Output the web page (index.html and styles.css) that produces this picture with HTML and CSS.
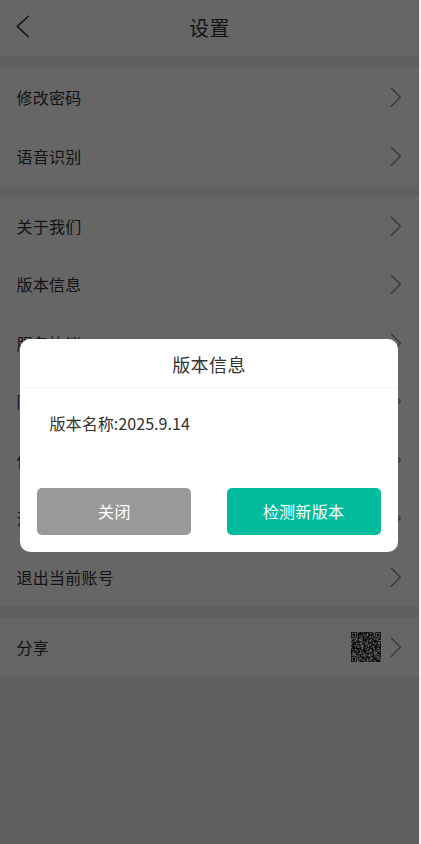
FILE: index.html
```html
<!DOCTYPE html>
<html lang="zh-CN">
<head>
<meta charset="utf-8">
<title>设置</title>
<link rel="stylesheet" href="styles.css">
</head>
<body>
<svg class="symbols" aria-hidden="true">
  <symbol id="next" viewBox="0 0 12 20"><path d="M1.4 1.2 10.4 10.2 1.4 19.2"/></symbol>
</svg>
<div class="screen">
  <header class="header">
    <svg class="back" viewBox="0 0 14 23"><path d="M12.4 1.2 1.2 11.4 12.4 21.8"/></svg>
    <h1>设置</h1>
  </header>
  <section class="group">
    <div class="row"><span>修改密码</span><svg class="next"><use href="#next"/></svg></div>
    <div class="row"><span>语音识别</span><svg class="next"><use href="#next"/></svg></div>
  </section>
  <section class="group">
    <div class="row"><span>关于我们</span><svg class="next"><use href="#next"/></svg></div>
    <div class="row"><span>版本信息</span><svg class="next"><use href="#next"/></svg></div>
    <div class="row"><span>服务协议</span><svg class="next"><use href="#next"/></svg></div>
    <div class="row"><span>隐私政策</span><svg class="next"><use href="#next"/></svg></div>
    <div class="row"><span>使用帮助</span><svg class="next"><use href="#next"/></svg></div>
    <div class="row"><span>注销账号</span><svg class="next"><use href="#next"/></svg></div>
    <div class="row"><span>退出当前账号</span><svg class="next"><use href="#next"/></svg></div>
  </section>
  <section class="group">
    <div class="row"><span>分享</span><svg class="qr" viewBox="0 0 37 37"><path id="qr"/></svg><svg class="next"><use href="#next"/></svg></div>
  </section>
  <div class="overlay">
    <div class="dialog">
      <h2>版本信息</h2>
      <p>版本名称:2025.9.14</p>
      <div class="actions">
        <button class="close">关闭</button>
        <button class="check">检测新版本</button>
      </div>
    </div>
  </div>
</div>
<script src="qr.js"></script>
</body>
</html>
```
FILE: styles.css
```css
* { box-sizing: border-box; }
body {
  margin: 0;
  height: 844px;
  overflow: hidden;
  background: #f0f0f0;
  font-family: "Noto Sans CJK SC", sans-serif;
  color: #333;
}
.symbols { position: absolute; width: 0; height: 0; }
.screen {
  position: relative;
  width: 419px;
  height: 844px;
  overflow: hidden;
  background: #f1f1f1;
}
.header {
  display: flex;
  align-items: center;
  height: 56px;
  margin-bottom: 12px;
  padding: 0 16px;
  background: #fff;
}
h1, h2, p { margin: 0; font-weight: 400; }
h1 {
  flex: 1;
  padding-right: 14px;
  font-size: 20px;
  line-height: 56px;
  letter-spacing: 0.5px;
  text-align: center;
}
svg { fill: none; stroke-linecap: round; stroke-linejoin: round; }
.back { width: 14px; height: 23px; margin-top: -3px; stroke: #333; stroke-width: 1.5; }
.next { width: 12px; height: 20px; stroke: #8c8c8c; stroke-width: 1.3; }
.group { margin-bottom: 11.8px; background: #fff; }
.row {
  display: flex;
  align-items: center;
  height: 58.45px;
  padding: 1px 17px 0 16.5px;
  border-bottom: 1px solid #fafafa;
  font-size: 16px;
  letter-spacing: 0.25px;
}
.row span { flex: 1; }
.row:last-child { padding-top: 0; border-bottom: 0; }
.qr { width: 30px; height: 30px; margin-right: 9px; }
.qr path { fill: #111; }
.overlay {
  position: absolute;
  inset: 0;
  display: flex;
  justify-content: center;
  align-items: flex-start;
  padding: 339px 1px 0 0;
  background: rgba(0, 0, 0, 0.6);
}
.dialog {
  width: 378px;
  height: 213px;
  border-radius: 10px;
  background: #fff;
}
.dialog h2 {
  height: 49px;
  border-bottom: 1px solid #f4f4f4;
  font-size: 18px;
  line-height: 50px;
  letter-spacing: 0.4px;
  text-align: center;
}
.dialog p {
  height: 100px;
  padding: 23px 29.5px 0;
  font-size: 16.1px;
  line-height: 24px;
}
.actions { display: flex; justify-content: space-between; padding: 0 17.5px 0 17.4px; }
button {
  width: 154px;
  height: 47px;
  padding: 0 0 1px;
  border: 0;
  border-radius: 5px;
  color: #fff;
  font: inherit;
  font-size: 16px;
  letter-spacing: 0.3px;
}
.close { background: #999; }
.check { background: #00bc9d; }
```
FILE: qr.js
```js
// Fills the share code with modules and its three finder squares.
const size = 37;
let seed = 20259;
let d = "";
const finder = (x, y) => {
  for (const [fx, fy] of [[0, 0], [size - 7, 0], [0, size - 7]]) {
    const dx = x - fx, dy = y - fy;
    if (dx >= -1 && dx <= 7 && dy >= -1 && dy <= 7) {
      const r = Math.max(Math.abs(dx - 3), Math.abs(dy - 3));
      return r === 3 || r <= 1;
    }
  }
  return null;
};
for (let y = 0; y < size; y++) {
  for (let x = 0; x < size; x++) {
    seed = (seed * 1103515245 + 12345) % 2147483648;
    const f = finder(x, y);
    if (f === null ? seed / 2147483648 < 0.6 : f) d += `M${x} ${y}h1v1h-1z`;
  }
}
document.getElementById("qr").setAttribute("d", d);
```
